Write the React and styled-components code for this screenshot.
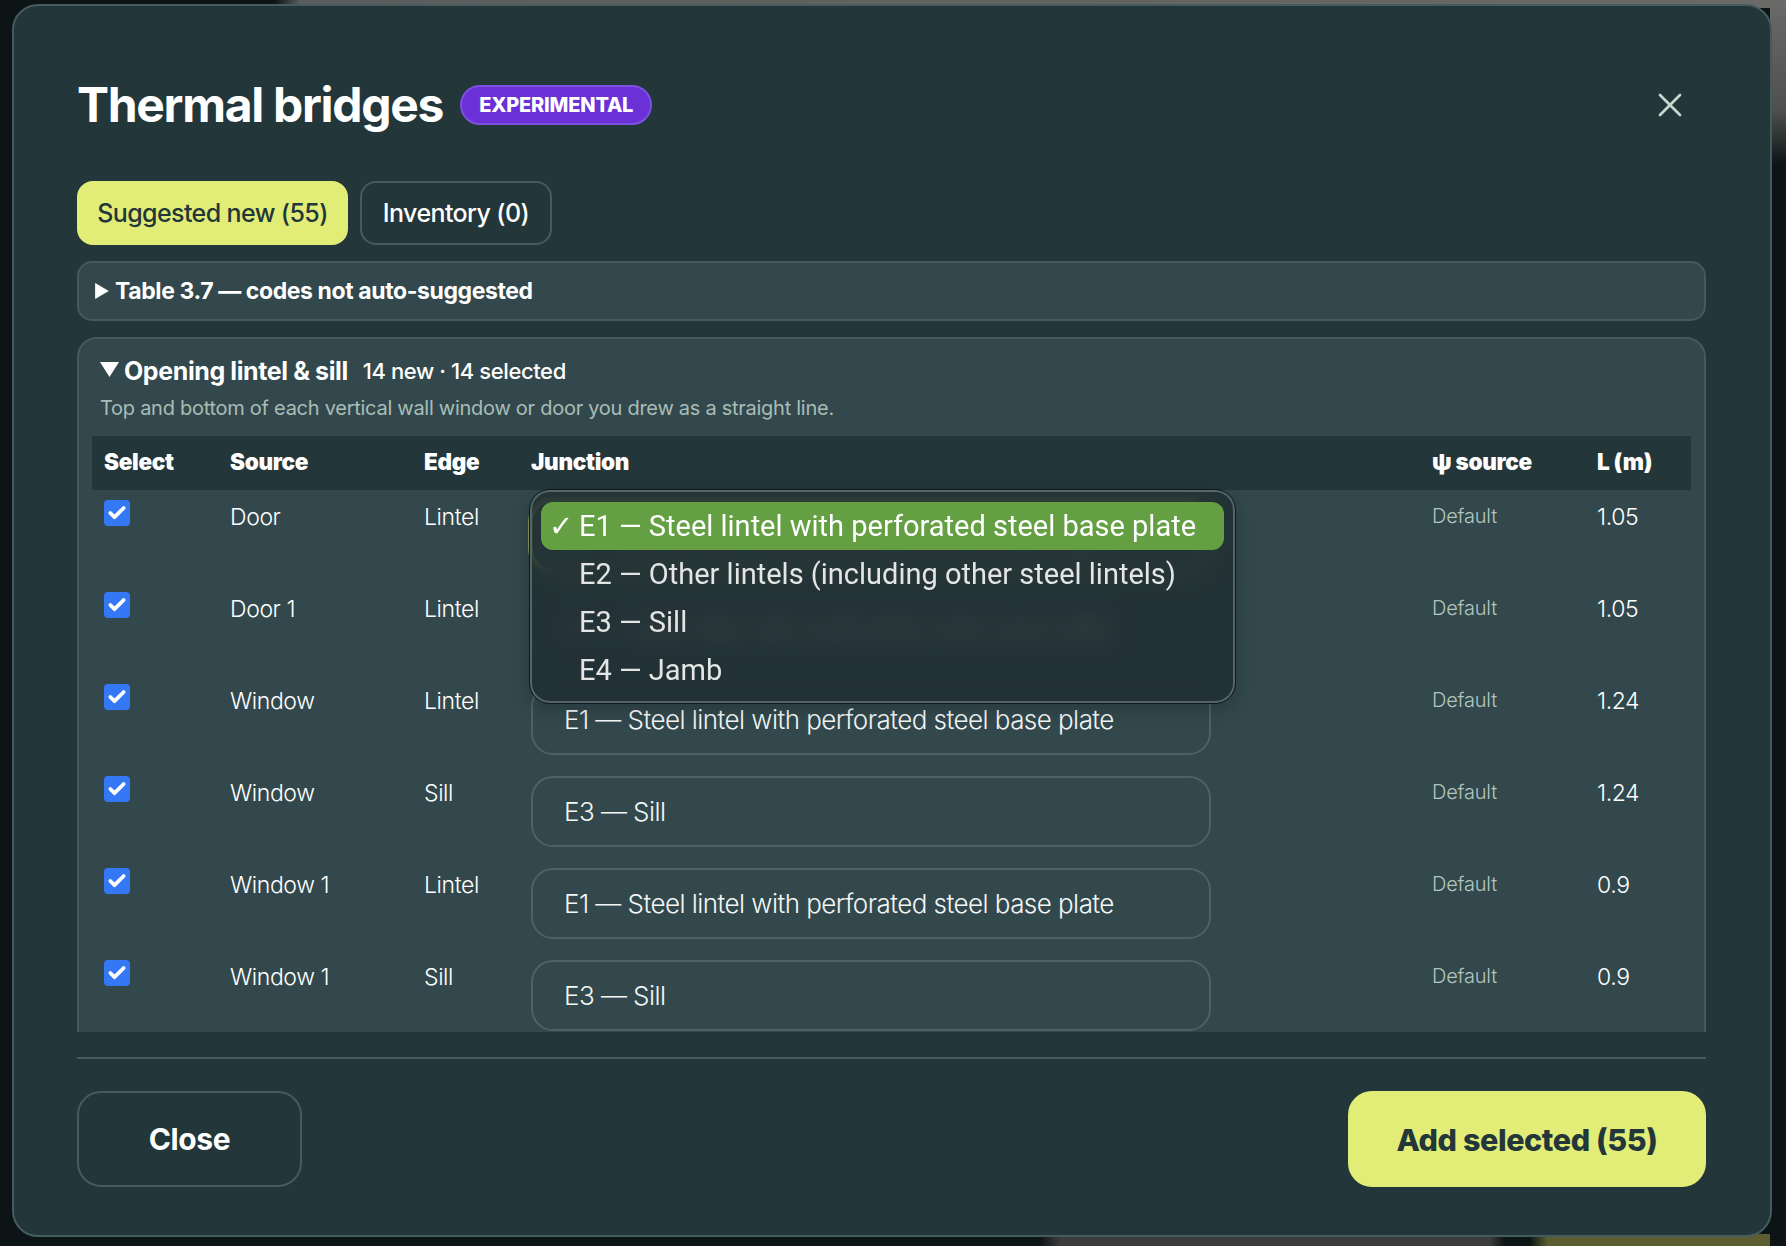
import React from "react";
import styled, { createGlobalStyle } from "styled-components";
import { Check, X } from "lucide-react";

const rows = [
  { source: "Door", edge: "Lintel", junction: "E1 — Steel lintel with perforated steel base plate", len: "1.05", focused: true },
  { source: "Door 1", edge: "Lintel", junction: "E1 — Steel lintel with perforated steel base plate", len: "1.05" },
  { source: "Window", edge: "Lintel", junction: "E1 — Steel lintel with perforated steel base plate", len: "1.24" },
  { source: "Window", edge: "Sill", junction: "E3 — Sill", len: "1.24" },
  { source: "Window 1", edge: "Lintel", junction: "E1 — Steel lintel with perforated steel base plate", len: "0.9" },
  { source: "Window 1", edge: "Sill", junction: "E3 — Sill", len: "0.9" },
];

const options = [
  "E1 — Steel lintel with perforated steel base plate",
  "E2 — Other lintels (including other steel lintels)",
  "E3 — Sill",
  "E4 — Jamb",
];

export default function App() {
  return (
    <>
      <GlobalStyle />
      <Modal>
        <Header>
          <Title>Thermal bridges</Title>
          <Badge>EXPERIMENTAL</Badge>
          <CloseIcon>
            <X size={40} strokeWidth={1.6} />
          </CloseIcon>
        </Header>

        <Tabs>
          <Tab $active $width={271}>Suggested new (55)</Tab>
          <Tab $width={192}>Inventory (0)</Tab>
        </Tabs>

        <Collapsed>
          <Caret viewBox="0 0 12 14">
            <path d="M0 0 L12 7 L0 14 Z" />
          </Caret>
          Table 3.7 — codes not auto-suggested
        </Collapsed>

        <Body>
          <Section>
            <SectionTitle>
              <CaretDown viewBox="0 0 18 14">
                <path d="M0 0 H18 L9 14 Z" />
              </CaretDown>
              <strong>Opening lintel &amp; sill</strong>
              <span>14 new · 14 selected</span>
            </SectionTitle>
            <SectionNote>
              Top and bottom of each vertical wall window or door you drew as a straight line.
            </SectionNote>

            <TableWrap>
              <Table>
                <colgroup>
                  <col width="126" />
                  <col width="194" />
                  <col width="107" />
                  <col width="901" />
                  <col width="165" />
                  <col width="106" />
                </colgroup>
                <thead>
                  <tr>
                    <Th>Select</Th>
                    <Th>Source</Th>
                    <Th>Edge</Th>
                    <Th>Junction</Th>
                    <Th>ψ source</Th>
                    <Th>L (m)</Th>
                  </tr>
                </thead>
                <tbody>
                  {rows.map((row, i) => (
                    <tr key={i}>
                      <Td>
                        <CheckBox>
                          <Check size={20} strokeWidth={4.5} color="#fff" />
                        </CheckBox>
                      </Td>
                      <TextTd>{row.source}</TextTd>
                      <TextTd>{row.edge}</TextTd>
                      <Td>
                        <SelectBox $focused={row.focused}>{row.junction}</SelectBox>
                      </Td>
                      <MutedTd>Default</MutedTd>
                      <TextTd>{row.len}</TextTd>
                    </tr>
                  ))}
                </tbody>
              </Table>

              <Menu>
                {options.map((option, i) => (
                  <Option key={option} $selected={i === 0}>
                    <Tick>{i === 0 && "✓"}</Tick>
                    {option}
                  </Option>
                ))}
              </Menu>
            </TableWrap>
          </Section>
        </Body>

        <Footer>
          <GhostButton>Close</GhostButton>
          <PrimaryButton>Add selected (55)</PrimaryButton>
        </Footer>
      </Modal>
    </>
  );
}

const GlobalStyle = createGlobalStyle`
  html, body {
    margin: 0;
    height: 100%;
    overflow: hidden;
  }
  body {
    font-family: Inter, "Liberation Sans", sans-serif;
    background-color: #0c1416;
    background-repeat: no-repeat;
    background-image:
      linear-gradient(90deg, #0c1416 275px, #5a5d5b 300px, #6a6a68 100%),
      linear-gradient(180deg, #6a6a68 0, #4e504f 110px, #0c1416 165px),
      linear-gradient(90deg, #0c1416 1040px, #3c3c3c 1060px, #3c3c3c 1490px, #0c1416 1505px, #0c1416 1530px, #5c5e32 1548px);
    background-size: 100% 8px, 16px 100%, 100% 12px;
    background-position: top left, top right, bottom left;
  }
`;

const Modal = styled.div`
  box-sizing: border-box;
  width: 1760px;
  height: 1233px;
  margin: 4px 0 0 12px;
  padding: 0 64px 48px 63px;
  display: flex;
  flex-direction: column;
  background: #23363a;
  border: 2px solid #445b60;
  border-radius: 26px;
  color: #fff;
`;

const Header = styled.div`
  display: flex;
  align-items: center;
  gap: 17px;
  height: 175px;
  padding-top: 22px;
  box-sizing: border-box;
  flex: none;
`;

const Title = styled.h1`
  margin: 0;
  font-size: 48px;
  font-weight: 700;
  letter-spacing: -1.3px;
  line-height: 1;
`;

const Badge = styled.span`
  box-sizing: border-box;
  height: 40px;
  padding: 0 17px;
  display: flex;
  align-items: center;
  font-size: 20px;
  font-weight: 800;
  letter-spacing: -0.2px;
  background: #6931d6;
  border: 2px solid #7d50e2;
  border-radius: 20px;
`;

const CloseIcon = styled.span`
  margin-left: auto;
  margin-right: 16px;
  display: flex;
  color: #c9d8cf;
`;

const Tabs = styled.div`
  display: flex;
  gap: 12px;
  flex: none;
`;

const Tab = styled.div`
  box-sizing: border-box;
  width: ${(p) => p.$width}px;
  height: 64px;
  display: flex;
  align-items: center;
  justify-content: center;
  font-size: 25px;
  font-weight: 500;
  letter-spacing: -0.6px;
  border-radius: 16px;
  color: ${(p) => (p.$active ? "#23363a" : "#fff")};
  background: ${(p) => (p.$active ? "#e1ed76" : "transparent")};
  border: 2px solid ${(p) => (p.$active ? "#e1ed76" : "#445b60")};
`;

const Collapsed = styled.div`
  box-sizing: border-box;
  height: 60px;
  margin-top: 16px;
  padding: 0 16px;
  display: flex;
  align-items: center;
  gap: 6px;
  flex: none;
  font-size: 23px;
  font-weight: 700;
  letter-spacing: -0.4px;
  background: #32484d;
  border: 2px solid #45595e;
  border-radius: 15px;
`;

const Caret = styled.svg`
  width: 14px;
  height: 16px;
  fill: #fff;
`;

const CaretDown = styled.svg`
  width: 19px;
  height: 15px;
  fill: #fff;
  margin-top: -4px;
`;

const Body = styled.div`
  flex: 1;
  min-height: 0;
  margin-top: 16px;
  overflow: hidden;
`;

const Section = styled.section`
  box-sizing: border-box;
  padding: 14px 12px 20px 13px;
  background: #32484d;
  border: 2px solid #45595e;
  border-radius: 20px;
`;

const SectionTitle = styled.div`
  display: flex;
  align-items: center;
  height: 36px;
  padding-left: 8px;
  font-size: 25px;
  letter-spacing: -0.4px;
  strong {
    margin-left: 5px;
    font-weight: 700;
  }
  span {
    margin-left: 15px;
    font-size: 22px;
    font-weight: 500;
  }
`;

const SectionNote = styled.p`
  margin: 4px 0 13px;
  padding-left: 8px;
  font-size: 20px;
  line-height: 30px;
  letter-spacing: -0.27px;
  color: #a9bdb5;
`;

const TableWrap = styled.div`
  position: relative;
`;

const Table = styled.table`
  width: 1599px;
  table-layout: fixed;
  border-collapse: collapse;
`;

const Th = styled.th`
  box-sizing: border-box;
  height: 54px;
  padding: 0 12px 3px;
  text-align: left;
  font-size: 22.5px;
  font-weight: 900;
  letter-spacing: -0.3px;
  background: #23363a;
`;

const Td = styled.td`
  box-sizing: border-box;
  height: 92px;
  padding: 10px 12px;
  vertical-align: top;
`;

const TextTd = styled(Td)`
  padding-top: 12px;
  font-size: 23px;
  line-height: 30px;
  letter-spacing: -0.4px;
  font-weight: 300;
`;

const MutedTd = styled(TextTd)`
  padding-top: 11px;
  font-size: 20px;
  color: #b3c6bd;
  letter-spacing: -0.2px;
`;

const CheckBox = styled.span`
  display: flex;
  align-items: center;
  justify-content: center;
  width: 26px;
  height: 26px;
  background: #3478f6;
  border-radius: 4px;
`;

const SelectBox = styled.div`
  box-sizing: border-box;
  width: 680px;
  height: 71px;
  padding: 0 31px;
  display: flex;
  align-items: center;
  font-size: 26px;
  font-weight: 300;
  letter-spacing: -0.55px;
  color: #f4f7f5;
  background: #32484d;
  border: 2px solid ${(p) => (p.$focused ? "#d8e46e" : "#4d6267")};
  box-shadow: ${(p) => (p.$focused ? "0 0 0 3px rgba(225, 237, 118, 0.5)" : "none")};
  border-radius: 22px;
`;

const Menu = styled.div`
  position: absolute;
  top: 54px;
  left: 438px;
  box-sizing: border-box;
  width: 705px;
  height: 213px;
  padding: 10px 9px;
  background: rgba(30, 42, 46, 0.78);
  backdrop-filter: blur(14px);
  border: 2px solid #54666a;
  outline: 1px solid #11191b;
  border-radius: 20px;
  box-shadow: 0 6px 18px rgba(0, 0, 0, 0.22);
`;

const Option = styled.div`
  height: 48px;
  display: flex;
  align-items: center;
  border-radius: 12px;
  font-family: Roboto, "Noto Sans", sans-serif;
  font-size: 29px;
  color: ${(p) => (p.$selected ? "#fff" : "#e4e6e4")};
  background: ${(p) => (p.$selected ? "#64a043" : "transparent")};
`;

const Tick = styled.span`
  width: 38px;
  flex: none;
  padding-left: 8px;
  box-sizing: border-box;
  font-family: "DejaVu Sans", sans-serif;
  font-size: 29px;
  font-weight: 700;
`;

const Footer = styled.div`
  flex: none;
  margin-top: 25px;
  padding-top: 32px;
  display: flex;
  justify-content: space-between;
  border-top: 2px solid #445b60;
`;

const GhostButton = styled.div`
  box-sizing: border-box;
  width: 225px;
  height: 96px;
  display: flex;
  align-items: center;
  justify-content: center;
  font-size: 30px;
  font-weight: 700;
  letter-spacing: -0.4px;
  border: 2px solid #445b60;
  border-radius: 24px;
`;

const PrimaryButton = styled(GhostButton)`
  width: 358px;
  font-size: 30.5px;
  font-weight: 800;
  background: #e1ed76;
  border-color: #e1ed76;
  color: #23363a;
`;
